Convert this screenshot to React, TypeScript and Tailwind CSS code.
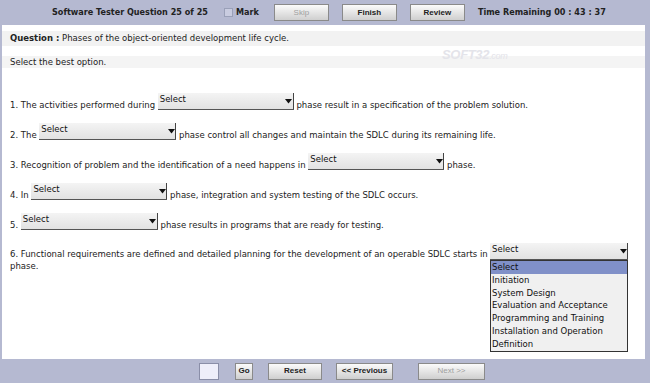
import React from "react";

const font = { fontFamily: '"DejaVu Sans", Verdana, sans-serif' };

function Btn({ w, label, disabled }: { w: string; label: string; disabled?: boolean }) {
  return (
    <div
      className={`${w} h-[17px] flex items-center justify-center border border-[#8a8a8a] bg-gradient-to-b from-[#fbfbfb] to-[#cfcfcf] text-[8px] font-bold ${disabled ? "text-[#a0a0a0] font-normal" : "text-[#222]"}`}
      style={{ fontFamily: '"Liberation Sans", Arial, sans-serif' }}
    >
      {label}
    </div>
  );
}

function Sel({ w }: { w: string }) {
  return (
    <div className={`${w} h-[17px] relative shrink-0 bg-gradient-to-b from-[#f4f4f4] to-[#e2e2e2] border-b border-[#555] flex`}>
      <span className="pl-[2px] pt-[1px] text-[8.5px] leading-[10px] text-[#111]">Select</span>
      <div className="absolute right-0 top-0 w-[9px] h-[16px] border-r border-[#444] flex items-center justify-center">
        <svg width="7" height="5" viewBox="0 0 7 5"><path d="M0 0 H7 L3.5 4.5 Z" fill="#111" /></svg>
      </div>
    </div>
  );
}

export default function App() {
  const items = ["Select", "Initiation", "System Design", "Evaluation and Acceptance", "Programming and Training", "Installation and Operation", "Definition"];
  return (
    <div className="w-[650px] h-[383px] bg-[#b5b9d1] flex flex-col overflow-hidden text-[#222]" style={font}>
      <div className="h-[25px] shrink-0 flex items-center">
        <div className="ml-[52px] w-[160px] text-[8.1px] font-bold text-[#222] whitespace-nowrap">Software Tester Question 25 of 25</div>
        <div className="ml-[12px] w-[9px] h-[9px] border border-[#9aa0b8] bg-[#c9cce0]" />
        <div className="ml-[3px] text-[8.1px] font-bold text-[#222]">Mark</div>
        <div className="ml-[15px] flex gap-[13px]">
          <Btn w="w-[55px]" label="Skip" disabled />
          <Btn w="w-[55px]" label="Finish" />
          <Btn w="w-[55px]" label="Review" />
        </div>
        <div className="ml-[13px] text-[8.1px] font-bold whitespace-nowrap">Time Remaining 00 : 43 : 37</div>
      </div>
      <div className="relative ml-[2px] mr-[5px] h-[334px] bg-white flex flex-col text-[8.5px]">
        <div className="mt-[6px] h-[15px] bg-[#f2f2f2] flex items-center pl-[8px]">
          <b>Question :</b>&nbsp;Phases of the object-oriented development life cycle.
        </div>
        <div className="absolute left-[440px] top-[20px] text-[13px] italic font-bold text-[#e4e4ea] tracking-tight" style={{ fontFamily: '"Liberation Sans", Arial, sans-serif' }}>
          SOFT32<span className="text-[9px] font-normal">.com</span>
        </div>
        <div className="mt-[10px] h-[12px] bg-[#f4f4f4] flex items-center pl-[8px]">Select the best option.</div>
        <div className="mt-[25px] flex flex-col gap-[13px] pl-[8px]">
          <div className="h-[17px] flex items-end">
            <span className="mb-[-2px]">1. The activities performed during&nbsp;</span>
            <Sel w="w-[136px]" />
            <span className="mb-[-2px]">&nbsp;phase result in a specification of the problem solution.</span>
          </div>
          <div className="h-[17px] flex items-end">
            <span className="mb-[-2px]">2. The&nbsp;</span>
            <Sel w="w-[137px]" />
            <span className="mb-[-2px]">&nbsp;phase control all changes and maintain the SDLC during its remaining life.</span>
          </div>
          <div className="h-[17px] flex items-end">
            <span className="mb-[-2px]">3. Recognition of problem and the identification of a need happens in&nbsp;</span>
            <Sel w="w-[136px]" />
            <span className="mb-[-2px]">&nbsp;phase.</span>
          </div>
          <div className="h-[17px] flex items-end">
            <span className="mb-[-2px]">4. In&nbsp;</span>
            <Sel w="w-[136px]" />
            <span className="mb-[-2px]">&nbsp;phase, integration and system testing of the SDLC occurs.</span>
          </div>
          <div className="h-[17px] flex items-end">
            <span className="mb-[-2px]">5.&nbsp;</span>
            <Sel w="w-[137px]" />
            <span className="mb-[-2px]">&nbsp;phase results in programs that are ready for testing.</span>
          </div>
          <div className="h-[17px] relative">
            <div className="absolute left-[480px] top-0">
              <Sel w="w-[138px]" />
              <div className="w-[138px] border border-[#333] bg-[#f0f0f0] flex flex-col">
                {items.map((it, i) => (
                  <div key={it} className={`h-[12.8px] leading-[12.8px] pl-[1px] text-[8.5px] whitespace-nowrap ${i === 0 ? "bg-[#8090c8] text-[#111]" : "text-[#111]"}`}>
                    {it}
                  </div>
                ))}
              </div>
            </div>
            <div className="pt-[5px] leading-[12px]">
              6. Functional requirements are defined and detailed planning for the development of an operable SDLC starts in
              <br />
              phase.
            </div>
          </div>
        </div>
      </div>
      <div className="flex-1 flex items-center">
        <div className="ml-[199px] w-[20px] h-[17px] bg-[#eeeefa] border border-[#8a8ea8]" />
        <div className="ml-[16px] flex items-center">
          <Btn w="w-[18px]" label="Go" />
          <div className="ml-[15px]"><Btn w="w-[54px]" label="Reset" /></div>
          <div className="ml-[14px]"><Btn w="w-[57px]" label="<< Previous" /></div>
          <div className="ml-[25px]"><Btn w="w-[67px]" label="Next >>" disabled /></div>
        </div>
      </div>
    </div>
  );
}
